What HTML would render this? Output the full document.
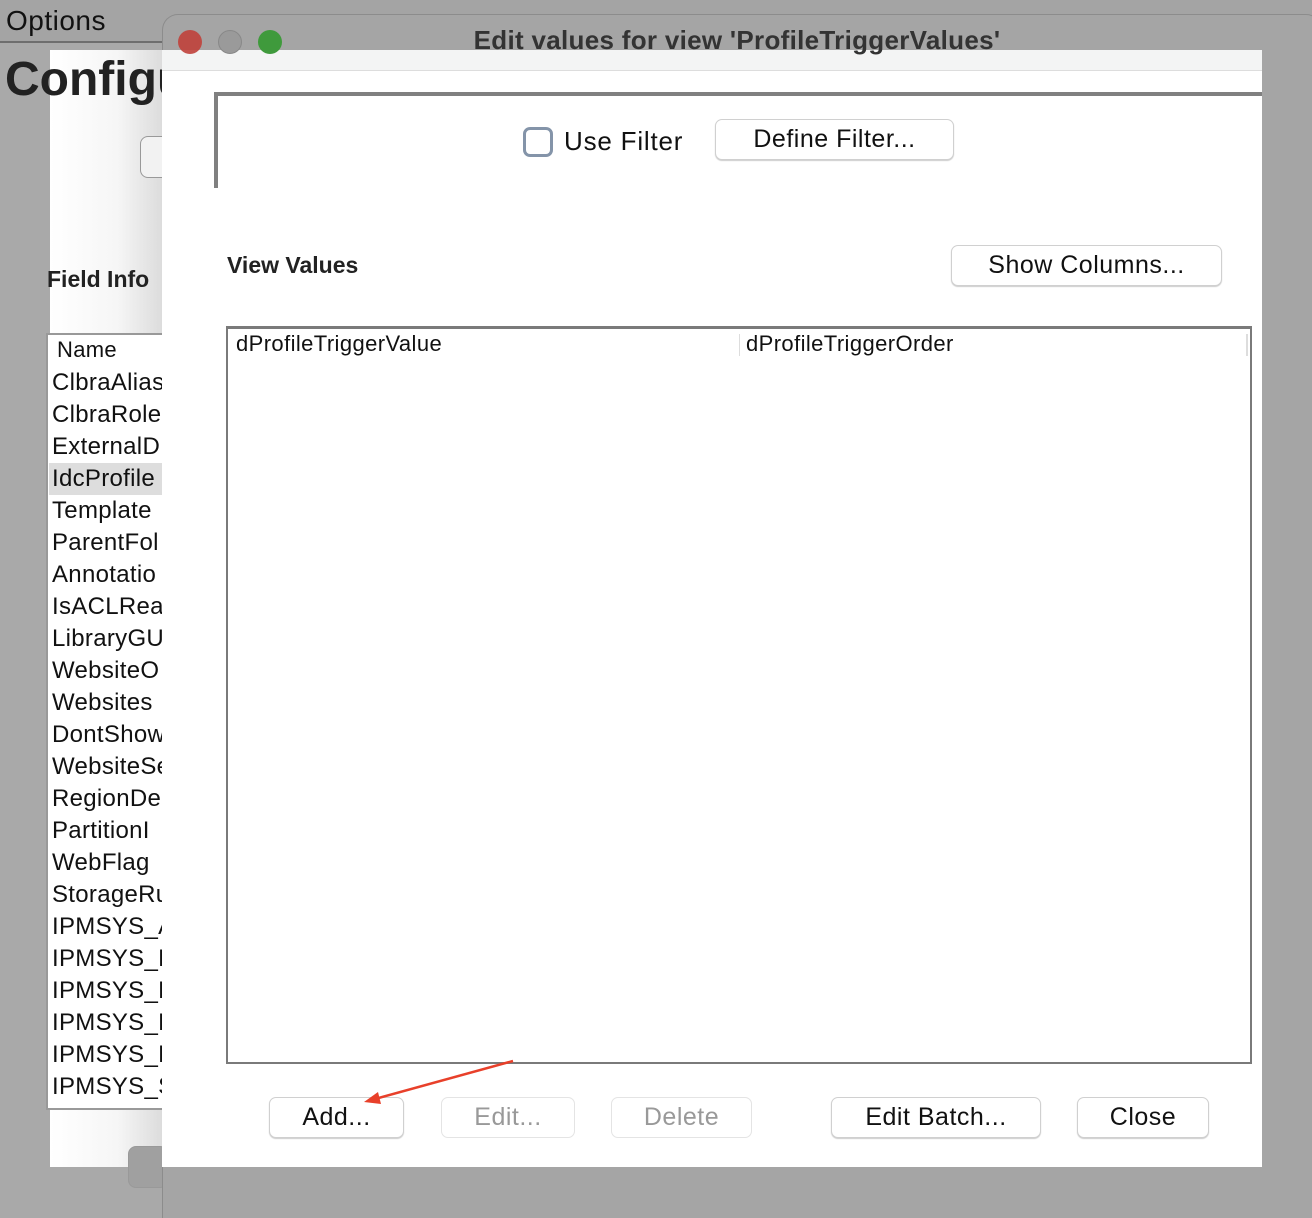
<!DOCTYPE html>
<html style="overflow:hidden"><head><style>
*{margin:0;padding:0;box-sizing:border-box}
html,body{width:1312px;height:1218px;overflow:hidden}
body{background:#a9a9a9;position:relative;font-family:"Liberation Sans","DejaVu Sans",sans-serif;color:#000}
.a{position:absolute}
.btn{position:absolute;background:#fff;border:1px solid #d0d0d0;border-radius:7px;box-shadow:0 1px 1px rgba(0,0,0,.2);text-align:center;font-size:25px;line-height:38px;color:#111;letter-spacing:.5px}
.dis{color:#999;box-shadow:none;border-color:#e4e4e4}
.li{position:absolute;left:52px;font-size:24px;color:#111;white-space:nowrap;letter-spacing:.3px}
</style></head><body>
<div class="a" style="left:0;top:0;width:1312px;height:43px;background:#a4a4a4;border-bottom:2px solid #6e6e6e"></div>
<div class="a" style="left:6px;top:5px;font-size:28px;color:#111;letter-spacing:.5px">Options</div>
<div class="a" style="left:50px;top:50px;width:112px;height:1117px;background:linear-gradient(90deg,#fff 0%,#f6f6f6 60%,#dcdcdc 100%)"></div>
<div class="a" style="left:5px;top:52px;font-size:48px;font-weight:bold;color:#222">Configu</div>
<div class="a" style="left:140px;top:136px;width:40px;height:42px;border:1px solid #999;border-radius:8px;background:#f2f2f2"></div>
<div class="a" style="left:47px;top:266px;font-size:23px;font-weight:bold;color:#222">Field Info</div>
<div class="a" style="left:46px;top:333px;width:130px;height:777px;border:2px solid #999;background:#fff"></div>
<div class="li" style="left:57px;top:337px;font-size:22px">Name</div>
<div class="a" style="left:49px;top:463px;width:113px;height:32px;background:#ddd"></div>
<div class="li" style="top:369px">ClbraAlias</div>
<div class="li" style="top:401px">ClbraRole</div>
<div class="li" style="top:433px">ExternalD</div>
<div class="li" style="top:465px">IdcProfile</div>
<div class="li" style="top:497px">Template</div>
<div class="li" style="top:529px">ParentFol</div>
<div class="li" style="top:561px">Annotatio</div>
<div class="li" style="top:593px">IsACLRea</div>
<div class="li" style="top:625px">LibraryGU</div>
<div class="li" style="top:657px">WebsiteO</div>
<div class="li" style="top:689px">Websites</div>
<div class="li" style="top:721px">DontShow</div>
<div class="li" style="top:753px">WebsiteSe</div>
<div class="li" style="top:785px">RegionDe</div>
<div class="li" style="top:817px">PartitionI</div>
<div class="li" style="top:849px">WebFlag</div>
<div class="li" style="top:881px">StorageRu</div>
<div class="li" style="top:913px">IPMSYS_A</div>
<div class="li" style="top:945px">IPMSYS_B</div>
<div class="li" style="top:977px">IPMSYS_B</div>
<div class="li" style="top:1009px">IPMSYS_P</div>
<div class="li" style="top:1041px">IPMSYS_R</div>
<div class="li" style="top:1073px">IPMSYS_S</div>
<div class="a" style="left:128px;top:1146px;width:40px;height:42px;border:1px solid #999;border-radius:8px;background:#a0a0a0"></div>
<!-- dialog -->
<div class="a" style="left:162px;top:14px;width:1160px;height:1204px;background:#a5a5a5;border:1px solid #8c8c8c;border-bottom:none;border-radius:16px 16px 0 0"></div>
<div class="a" style="left:162px;top:50px;width:1100px;height:1117px;background:#fff"></div>
<div class="a" style="left:162px;top:50px;width:1100px;height:21px;background:#f3f4f4;border-bottom:1px solid #ddd"></div>
<div class="a" style="left:178px;top:30px;width:24px;height:24px;border-radius:50%;background:#c0413b;opacity:.9"></div>
<div class="a" style="left:218px;top:30px;width:24px;height:24px;border-radius:50%;background:#9a9a9a;border:1px solid #888"></div>
<div class="a" style="left:258px;top:30px;width:24px;height:24px;border-radius:50%;background:#3f9a3c"></div>
<div class="a" style="left:162px;top:25px;width:1150px;text-align:center;font-size:26px;font-weight:bold;color:#333;letter-spacing:.3px">Edit values for view 'ProfileTriggerValues'</div>
<div class="a" style="left:214px;top:92px;width:1048px;height:96px;border-top:4px solid #808080;border-left:4px solid #808080"></div>
<div class="a" style="left:523px;top:127px;width:30px;height:30px;border:3px solid #8494a9;border-radius:7px;background:#fff"></div>
<div class="a" style="left:564px;top:126px;font-size:26px;color:#111;letter-spacing:.8px">Use Filter</div>
<div class="btn" style="left:715px;top:119px;width:239px;height:41px">Define Filter...</div>
<div class="a" style="left:227px;top:252px;font-size:23px;font-weight:bold;color:#222">View Values</div>
<div class="btn" style="left:951px;top:245px;width:271px;height:41px">Show Columns...</div>
<div class="a" style="left:226px;top:326px;width:1026px;height:738px;border:2px solid #7a7a7a;border-top-width:3px;background:#fff"></div>
<div class="a" style="left:236px;top:331px;font-size:22px;color:#111;letter-spacing:.4px">dProfileTriggerValue</div>
<div class="a" style="left:739px;top:334px;width:1px;height:22px;background:#ddd"></div>
<div class="a" style="left:746px;top:331px;font-size:22px;color:#111;letter-spacing:.4px">dProfileTriggerOrder</div>
<div class="a" style="left:1246px;top:334px;width:2px;height:22px;background:#ddd"></div>
<div class="btn" style="left:269px;top:1097px;width:135px;height:41px">Add...</div>
<div class="btn dis" style="left:441px;top:1097px;width:134px;height:41px">Edit...</div>
<div class="btn dis" style="left:611px;top:1097px;width:141px;height:41px">Delete</div>
<div class="btn" style="left:831px;top:1097px;width:210px;height:41px">Edit Batch...</div>
<div class="btn" style="left:1077px;top:1097px;width:132px;height:41px">Close</div>
<svg class="a" style="left:0;top:0" width="1312" height="1218"><line x1="513" y1="1061" x2="375" y2="1099" stroke="#e8402a" stroke-width="2.5"/><polygon points="364,1102 378,1092 381,1104" fill="#e8402a"/></svg>
</body></html>
